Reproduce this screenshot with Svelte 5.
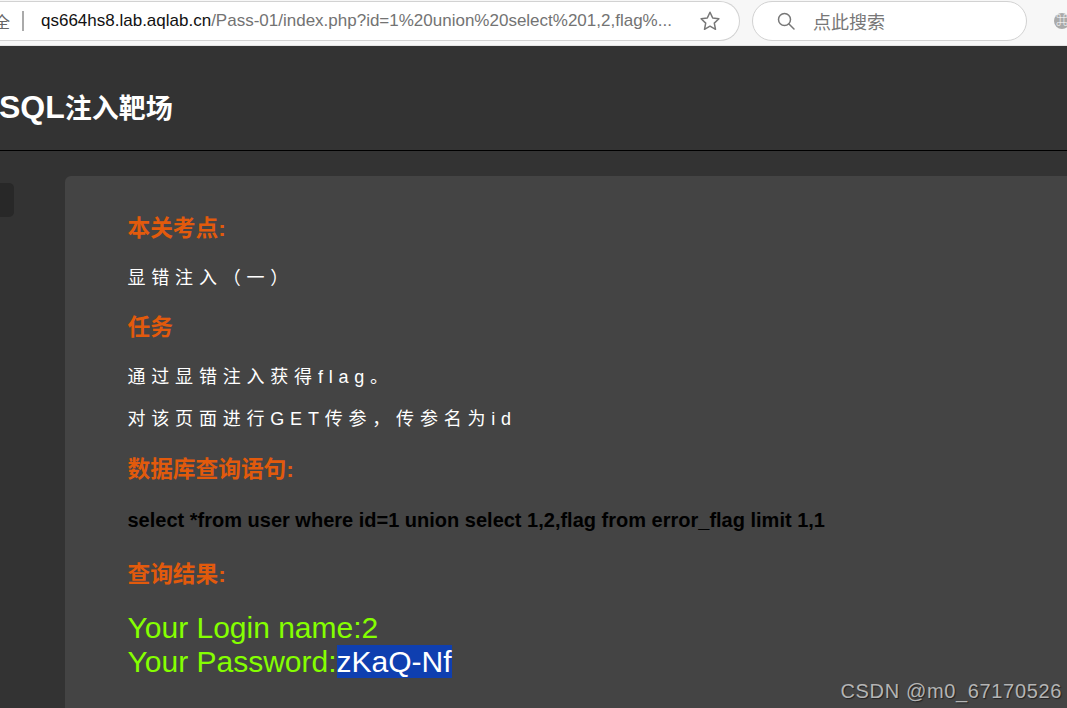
<script>
  const task = ['通过显错注入获得flag。', '对该页面进行GET传参，传参名为id'];
</script>

<div class="page">
  <div class="toolbar">
    <div class="address">
      <span class="secure">全</span>
      <span class="divider"></span>
      <span class="url"><span class="host">qs664hs8.lab.aqlab.cn</span>/Pass-01/index.php?id=1%20union%20select%201,2,flag%...</span>
      <svg class="star" viewBox="0 0 22 22" width="22" height="22" aria-hidden="true">
        <path d="M11 2.2l2.7 5.8 6.2.8-4.6 4.3 1.2 6.2L11 16.2l-5.5 3.1 1.2-6.2-4.6-4.3 6.2-.8z" fill="none" stroke="#777" stroke-width="1.5" stroke-linejoin="round"/>
      </svg>
    </div>
    <div class="search">
      <svg viewBox="0 0 20 20" width="20" height="20" aria-hidden="true">
        <circle cx="8.5" cy="8.5" r="6" fill="none" stroke="#777" stroke-width="1.5"/>
        <path d="M13 13l5 5" stroke="#777" stroke-width="1.5" stroke-linecap="round"/>
      </svg>
      <span>点此搜索</span>
    </div>
    <div class="ext"><span>⌘</span></div>
  </div>

  <header class="header"><h1>SQL<span class="cjk">注入靶场</span></h1></header>

  <div class="body">
    <aside class="side"><div class="pill"></div></aside>
    <main class="card">
      <h3 class="first">本关考点:</h3>
      <p>显错注入（一）</p>
      <h3 class="task">任务</h3>
      {#each task as line}
        <p>{line}</p>
      {/each}
      <h3 class="db">数据库查询语句:</h3>
      <p class="sql">select *from user where id=1 union select 1,2,flag from error_flag limit 1,1</p>
      <h3 class="res">查询结果:</h3>
      <div class="result">
        <div>Your Login name:2</div>
        <div>Your Password:<span class="sel">zKaQ-Nf</span></div>
      </div>
    </main>
  </div>

  <div class="mark">CSDN @m0_67170526</div>
</div>

<style>
  :global(body) {
    margin: 0;
    background: #333;
    overflow: hidden;
  }
  .page {
    position: relative;
    width: 1067px;
    height: 708px;
    overflow: hidden;
    display: flex;
    flex-direction: column;
    font-family: "Liberation Sans", "Noto Sans CJK SC", sans-serif;
  }
  .toolbar {
    height: 46px;
    box-sizing: border-box;
    flex: none;
    background: #f7f7f7;
    display: flex;
    align-items: flex-start;
    padding-top: 1px;
    border-bottom: 1px solid #e4e4e4;
  }
  .address {
    width: 740px;
    height: 40px;
    box-sizing: border-box;
    flex: none;
    background: #fff;
    border: 1px solid #d2d2d2;
    border-left: 0;
    border-radius: 0 20px 20px 0;
    display: flex;
    align-items: center;
    font-size: 17px;
  }
  .secure {
    width: 16px;
    margin-left: -6px;
    flex: none;
    color: #666;
    font-family: "Noto Sans CJK SC", sans-serif;
    font-size: 16px;
    line-height: 20px;
  }
  .divider {
    width: 2px;
    height: 20px;
    background: #aaa;
    margin-left: 12px;
    flex: none;
  }
  .url {
    margin-left: 17px;
    color: #737373;
    white-space: nowrap;
    flex: none;
    width: 658px;
    overflow: hidden;
  }
  .host {
    color: #111;
  }
  .star {
    flex: none;
  }
  .search {
    width: 275px;
    height: 40px;
    box-sizing: border-box;
    flex: none;
    margin-left: 12px;
    background: #fff;
    border: 1px solid #d2d2d2;
    border-radius: 20px;
    display: flex;
    align-items: center;
    padding-left: 23px;
    gap: 17px;
    color: #777;
    font-size: 18px;
    font-family: "Noto Sans CJK SC", sans-serif;
  }
  .ext {
    width: 16px;
    height: 16px;
    margin: 12px 0 0 27px;
    border-radius: 50%;
    background: #aaa;
    color: #fff;
    font-size: 12px;
    line-height: 16px;
    text-align: center;
    flex: none;
  }
  .header {
    height: 105px;
    box-sizing: border-box;
    flex: none;
    background: #333;
    border-bottom: 1px solid #000;
    display: flex;
    align-items: center;
    padding-top: 19px;
  }
  h1 {
    margin: 0;
    font-size: 32px;
    line-height: 36px;
    font-weight: 700;
    color: #fff;
    margin-left: -1px;
    letter-spacing: 0;
  }
  .cjk {
    font-size: 27px;
    letter-spacing: 0;
  }
  .body {
    flex: 1;
    display: flex;
    align-items: flex-start;
    padding-top: 25px;
    min-height: 0;
  }
  .side {
    width: 65px;
    flex: none;
    padding-top: 7px;
  }
  .pill {
    width: 14px;
    height: 34px;
    background: #282828;
    border-radius: 0 5px 5px 0;
  }
  .card {
    flex: 1;
    height: 600px;
    box-sizing: border-box;
    background: #444;
    border-radius: 6px 0 0 0;
    padding: 38px 0 0 62.5px;
  }
  h3 {
    margin: 0;
    color: #e25a0c;
    font-size: 22.7px;
    line-height: 28px;
    font-weight: 700;
    letter-spacing: 0;
  }
  h3.task { margin-top: 23px; }
  h3.db { margin-top: 24px; }
  h3.res { margin-top: 28px; }
  p {
    margin: 0;
    color: #fff;
    font-size: 18px;
    line-height: 24px;
    letter-spacing: 5.8px;
    white-space: nowrap;
  }
  h3.first + p { margin-top: 24px; }
  h3.task + p { margin-top: 24px; }
  h3.task + p + p { margin-top: 18px; }
  p.sql {
    margin-top: 25px;
    color: #000;
    font-weight: 700;
    font-size: 20px;
    letter-spacing: 0;
  }
  .result {
    margin-top: 23px;
    color: #85ff00;
    font-size: 30px;
    line-height: 34px;
    white-space: nowrap;
  }
  .sel {
    background: #0f3fb0;
    color: #fff;
  }
  .mark {
    position: absolute;
    right: 5px;
    bottom: 6px;
    color: #b4b4b4;
    font-size: 20px;
    line-height: 22px;
    letter-spacing: 0.65px;
    text-shadow: 1px 1px 1px #222;
    font-family: "Liberation Sans", sans-serif;
  }
</style>
